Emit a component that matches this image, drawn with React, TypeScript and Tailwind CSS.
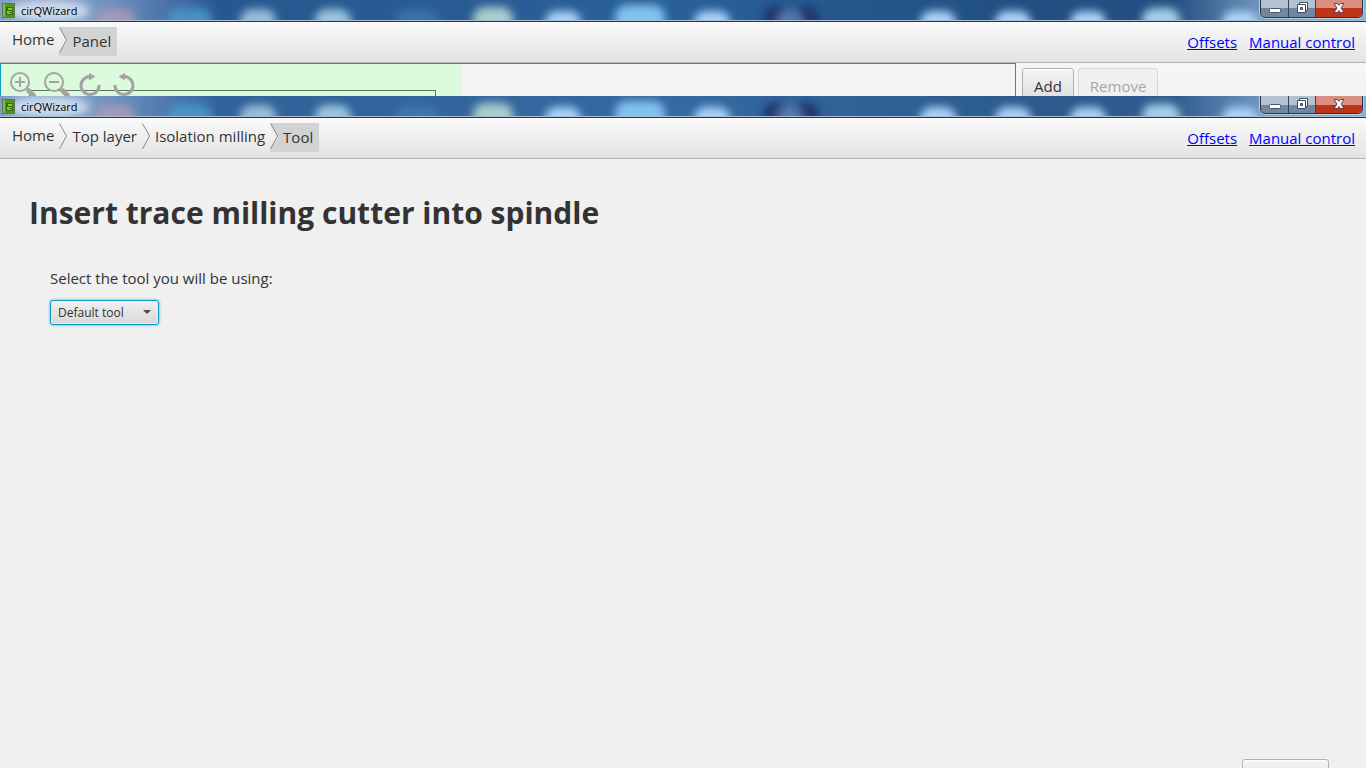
import type { ReactNode } from "react";

/** One step of the breadcrumb trail. */
interface Crumb {
  label: string;
  /** Height class of the item; completed steps are slightly shorter */
  height: string;
}

interface Blob {
  x: number;
  rx: number;
  ry: number;
  color: string;
  opacity: number;
}

// Desktop icons that shine through the glass title bar
const BLOBS: Blob[] = [
  { x: 115, rx: 20, ry: 18, color: "#b39bb8", opacity: 0.8 },
  { x: 190, rx: 22, ry: 19, color: "#4a9fd0", opacity: 0.75 },
  { x: 258, rx: 18, ry: 18, color: "#9cc3dc", opacity: 0.95 },
  { x: 333, rx: 18, ry: 18, color: "#9fcbe0", opacity: 0.95 },
  { x: 417, rx: 22, ry: 17, color: "#4384b8", opacity: 0.6 },
  { x: 493, rx: 20, ry: 20, color: "#a9cdcb", opacity: 1 },
  { x: 563, rx: 18, ry: 16, color: "#a9d4fb", opacity: 1 },
  { x: 640, rx: 25, ry: 22, color: "#7fc3ef", opacity: 1 },
  { x: 712, rx: 18, ry: 16, color: "#a9d4fb", opacity: 1 },
  { x: 776, rx: 13, ry: 21, color: "#1d2f66", opacity: 0.85 },
  { x: 806, rx: 13, ry: 21, color: "#1d2f66", opacity: 0.85 },
  { x: 790, rx: 13, ry: 17, color: "#6384ba", opacity: 0.8 },
  { x: 938, rx: 18, ry: 16, color: "#a9d4fb", opacity: 1 },
  { x: 1013, rx: 18, ry: 16, color: "#a9d4fb", opacity: 1 },
  { x: 1088, rx: 18, ry: 16, color: "#a9d4fb", opacity: 1 },
  { x: 1161, rx: 19, ry: 19, color: "#a3cfe8", opacity: 1 },
  { x: 1240, rx: 18, ry: 16, color: "#a9d4fb", opacity: 1 },
];

function GlassBackdrop({ id, light }: { id: string; light: boolean }) {
  return (
    <svg
      className="absolute inset-0 h-full w-full"
      viewBox="0 0 1366 21"
      preserveAspectRatio="none"
      aria-hidden="true"
    >
      <defs>
        <linearGradient id={`${id}-base`}>
          <stop offset="0" stopColor="#7f9cc3" />
          <stop offset="0.06" stopColor="#7f9dc8" />
          <stop offset="0.1" stopColor="#5f83b4" />
          <stop offset="0.16" stopColor="#28578f" />
          <stop offset="0.5" stopColor="#2a6099" />
          <stop offset="0.75" stopColor="#214e80" />
          <stop offset="0.86" stopColor="#244f82" />
          <stop offset="0.93" stopColor="#7a9bc0" />
          <stop offset="1" stopColor="#8fb2d6" />
        </linearGradient>
        <filter id={`${id}-blur`} x="-5%" y="-100%" width="110%" height="300%">
          <feGaussianBlur stdDeviation="4" />
        </filter>
      </defs>
      <rect width="1366" height="21" fill={`url(#${id}-base)`} />
      {light && <rect width="1366" height="21" fill="#6a9ad0" opacity="0.16" />}
      <g filter={`url(#${id}-blur)`}>
        {BLOBS.map((blob) => (
          <rect
            key={blob.x}
            x={blob.x - blob.rx}
            y={27 - blob.ry}
            width={blob.rx * 2}
            height={blob.ry * 2}
            rx="12"
            fill={blob.color}
            opacity={blob.opacity}
          />
        ))}
        <ellipse cx="48" cy="11" rx="42" ry="11" fill="#dce6f2" opacity="0.85" />
      </g>
    </svg>
  );
}

function AppIcon() {
  return (
    <svg width="13" height="15" viewBox="0 0 13 15" aria-hidden="true">
      <rect x="0.5" y="0.5" width="12" height="14" fill="#4f9c1a" stroke="#5f7450" />
      <rect x="1" y="1" width="2" height="13" fill="#7fbd42" />
      <path d="M4 4h7v8H4z" fill="#2f6a0c" />
      <path d="M6 5h4v2H6zM5 8h5v3H5z" fill="#84cf35" />
      <path d="M7 9h3v1H7z" fill="#2f6a0c" />
    </svg>
  );
}

function WindowControls() {
  return (
    <div className="relative flex h-[18px] w-[103px] self-start overflow-hidden rounded-b-[5px] border border-t-0 border-[#26354a] shadow-[0_0_0_1px_#b6cbe2]">
      <button
        type="button"
        aria-label="Minimize"
        className="flex w-7 items-center justify-center border-r border-[#33435a] bg-gradient-to-b from-[#b3c1d1] from-50% to-[#71869f] to-50%"
      >
        <svg width="13" height="17" viewBox="0 0 13 17">
          <rect x="1.5" y="8.5" width="11" height="4" rx="1" fill="#fff" stroke="#4a5568" />
        </svg>
      </button>
      <button
        type="button"
        aria-label="Restore"
        className="flex w-[27px] items-center justify-center border-r border-[#33435a] bg-gradient-to-b from-[#b3c1d1] from-50% to-[#71869f] to-50%"
      >
        <svg width="13" height="17" viewBox="0 0 13 17">
          <path d="M3.500 2.500h8v8h-8z" fill="#fff" stroke="#414b5e" />
          <path d="M1.500 4.500h8v8h-8z" fill="#fff" stroke="#414b5e" />
          <path d="M4.500 7.500h2v2h-2z" fill="#8492a6" stroke="#414b5e" />
        </svg>
      </button>
      <button
        type="button"
        aria-label="Close"
        className="flex flex-1 items-center justify-center bg-gradient-to-b from-[#d98e80] from-50% to-[#bd3418] to-50%"
      >
        <svg width="14" height="17" viewBox="0 0 14 17">
          <path
            d="M2 3.500h3.500l1.500 2 1.500-2h3.500L9 8l3 4.500H8.500L7 10.500 5.500 12.500H2L5 8z"
            fill="#fff"
            stroke="#50455a"
          />
        </svg>
      </button>
    </div>
  );
}

function TitleBar({ id, light }: { id: string; light: boolean }) {
  return (
    <header className="relative flex h-[22px] shrink-0 items-center justify-between border-b border-[#26354d] pr-[3px] pl-[2px]">
      <div className="absolute inset-0 overflow-hidden">
        <GlassBackdrop id={id} light={light} />
        <div className="absolute inset-x-0 bottom-0 h-px bg-[#a9bdd6]" />
      </div>
      <div className="relative flex items-center gap-[6px]">
        <AppIcon />
        <span className="text-[11px] leading-4 text-black">cirQWizard</span>
      </div>
      <WindowControls />
    </header>
  );
}

/** Chevron between two steps; `filled` paints the notch of the active step. */
function Chevron({ filled }: { filled: boolean }) {
  return (
    <svg
      className="shrink-0"
      width="9"
      height="29"
      viewBox="0 0 9 29"
      aria-hidden="true"
    >
      {filled && <path d="M0 0h9v29H0v-2l8-13z" fill="#d2d3d3" />}
      <path d="M0.500 0.500 7.500 13 0.500 26" fill="none" stroke="#85888d" />
    </svg>
  );
}

function Toolbar({ crumbs }: { crumbs: Crumb[] }) {
  return (
    <div className="flex h-[41px] shrink-0 items-start justify-between border-b border-[#b3b3b3] bg-gradient-to-b from-[#fafafa] to-[#e3e3e3] pr-[11px] pl-3">
      <nav aria-label="Wizard steps" className="pt-[5px]">
        <ol className="flex items-start text-[15px] text-[#333333]">
          {crumbs.map((crumb, index) => {
            const current = index === crumbs.length - 1;
            return (
              <li key={crumb.label} className="flex items-start">
                {index > 0 && <Chevron filled={current} />}
                <button
                  type="button"
                  aria-current={current ? "step" : undefined}
                  className={`flex items-center whitespace-nowrap ${crumb.height} ${
                    index > 0 ? "pl-1" : ""
                  } ${current ? "bg-[#d2d3d3] pr-[6px]" : "pr-[5px]"}`}
                >
                  {crumb.label}
                </button>
              </li>
            );
          })}
        </ol>
      </nav>
      <div className="flex gap-3 self-center text-[15px] leading-5 text-[#0000ff] underline">
        <a href="#offsets">Offsets</a>
        <a href="#manual-control">Manual control</a>
      </div>
    </div>
  );
}

function AppWindow({
  id,
  light = false,
  crumbs,
  className,
  children,
}: {
  id: string;
  /** Paler glass in the title bar */
  light?: boolean;
  crumbs: Crumb[];
  className: string;
  children: ReactNode;
}) {
  return (
    <section className={`flex flex-col overflow-hidden ${className}`}>
      <TitleBar id={id} light={light} />
      <Toolbar crumbs={crumbs} />
      {children}
    </section>
  );
}

function ZoomIcon({ plus }: { plus: boolean }) {
  return (
    <svg width="26" height="26" viewBox="0 0 26 26" fill="none" stroke="#a3a3a3">
      <circle cx="10" cy="10" r="9" strokeWidth="2" />
      <path d={plus ? "M5 10h10M10 5v10" : "M5 10h10"} strokeWidth="2" />
      <path d="m17 17 3 3" strokeWidth="3" />
      <path d="m19 19 5 5" strokeWidth="5" strokeLinecap="round" />
    </svg>
  );
}

function RotateIcon({ flipped }: { flipped: boolean }) {
  return (
    <svg width="22" height="24" viewBox="0 0 22 24" fill="none">
      <g transform={flipped ? "matrix(-1 0 0 1 22 0)" : undefined}>
        <path
          d="M12 3.500A9 9 0 1 0 20 12"
          stroke="#a3a3a3"
          strokeWidth="3"
        />
        <path d="M10 0l6.500 3.500L10 7.500z" fill="#a3a3a3" />
      </g>
    </svg>
  );
}

function PanelPreview() {
  return (
    <div className="relative flex h-40 flex-1 border border-[#109bc6] bg-[#f3f3f3]">
      <div className="w-[461px] shrink-0 bg-[#dcfbdc] pt-[26px] pl-7">
        <div className="h-32 w-[407px] border border-[#5f7162]" />
      </div>
      {/* View controls float above the board */}
      <div className="absolute top-2 left-2 flex">
        <button type="button" aria-label="Zoom in" className="w-[34px] pl-px">
          <ZoomIcon plus />
        </button>
        <button type="button" aria-label="Zoom out" className="w-[34px] pl-px">
          <ZoomIcon plus={false} />
        </button>
        <button type="button" aria-label="Rotate clockwise" className="w-[34px] pl-[2px]">
          <RotateIcon flipped={false} />
        </button>
        <button type="button" aria-label="Rotate counterclockwise" className="w-[34px] pl-[2px]">
          <RotateIcon flipped />
        </button>
      </div>
    </div>
  );
}

function PanelWindow() {
  return (
    <AppWindow
      id="panel"
      className="h-24 shrink-0"
      crumbs={[
        { label: "Home", height: "h-[25px]" },
        { label: "Panel", height: "h-[29px]" },
      ]}
    >
      <div className="flex items-start bg-gradient-to-b from-[#f6f6f6] to-[#e8e8e8]">
        <PanelPreview />
        <div className="flex w-[350px] shrink-0 gap-1 pt-[5px] pl-[6px] text-[15px]">
          <button
            type="button"
            className="h-[37px] rounded-[3px] border border-[#b2b2b2] bg-gradient-to-b from-[#f4f4f4] to-[#dcdcdc] px-[11px] text-[#333333] shadow-[inset_0_1px_0_#fff]"
          >
            Add
          </button>
          <button
            type="button"
            disabled
            className="h-[37px] rounded-[3px] border border-[#d9d9d9] bg-[#f0f0f0] px-[11px] text-[#a6a6a6]"
          >
            Remove
          </button>
        </div>
      </div>
    </AppWindow>
  );
}

function ToolWindow() {
  return (
    <AppWindow
      id="tool"
      light
      className="min-h-0 flex-1"
      crumbs={[
        { label: "Home", height: "h-[25px]" },
        { label: "Top layer", height: "h-[27px]" },
        { label: "Isolation milling", height: "h-[27px]" },
        { label: "Tool", height: "h-[29px]" },
      ]}
    >
      <main className="flex min-h-0 flex-1 flex-col justify-between bg-[#f0f0f0] pt-8 text-[#333333]">
        <div className="px-[29px]">
          <h1 className="text-[30px] leading-[43px] font-bold">
            Insert trace milling cutter into spindle
          </h1>
          <div className="mt-[34px] flex flex-col items-start gap-[11px] pl-[21px]">
            <label htmlFor="tool-select" className="text-[15px] leading-5">
              Select the tool you will be using:
            </label>
            <div className="relative">
              <select
                id="tool-select"
                className="h-[25px] w-[109px] appearance-none rounded-[3px] border border-[#109bc6] bg-gradient-to-b from-[#f0f0f0] to-[#d8d8d8] pt-px pl-[7px] text-[12px] leading-4 shadow-[0_0_2px_1px_#8fcfe6,inset_0_0_0_1px_#e4eef2] focus:outline-none"
              >
                <option>Default tool</option>
              </select>
              <svg
                className="pointer-events-none absolute top-[11px] right-2"
                width="8"
                height="4"
                viewBox="0 0 8 4"
                aria-hidden="true"
              >
                <path d="M0 0h8L4 4z" fill="#4a4a4a" />
              </svg>
            </div>
          </div>
        </div>
        {/* The footer button runs past the lower window edge */}
        <div className="flex h-[9px] justify-end overflow-hidden pr-[37px]">
          <button
            type="button"
            aria-label="Next"
            className="h-9 w-[87px] shrink-0 rounded-[3px] border border-[#b2b2b2] bg-gradient-to-b from-[#f4f4f4] to-[#dcdcdc] shadow-[inset_0_1px_0_#fff]"
          />
        </div>
      </main>
    </AppWindow>
  );
}

export default function App() {
  return (
    <div className="flex h-screen flex-col overflow-hidden bg-[#f0f0f0] font-['Open_Sans','Noto_Sans',sans-serif]">
      <PanelWindow />
      <ToolWindow />
    </div>
  );
}
